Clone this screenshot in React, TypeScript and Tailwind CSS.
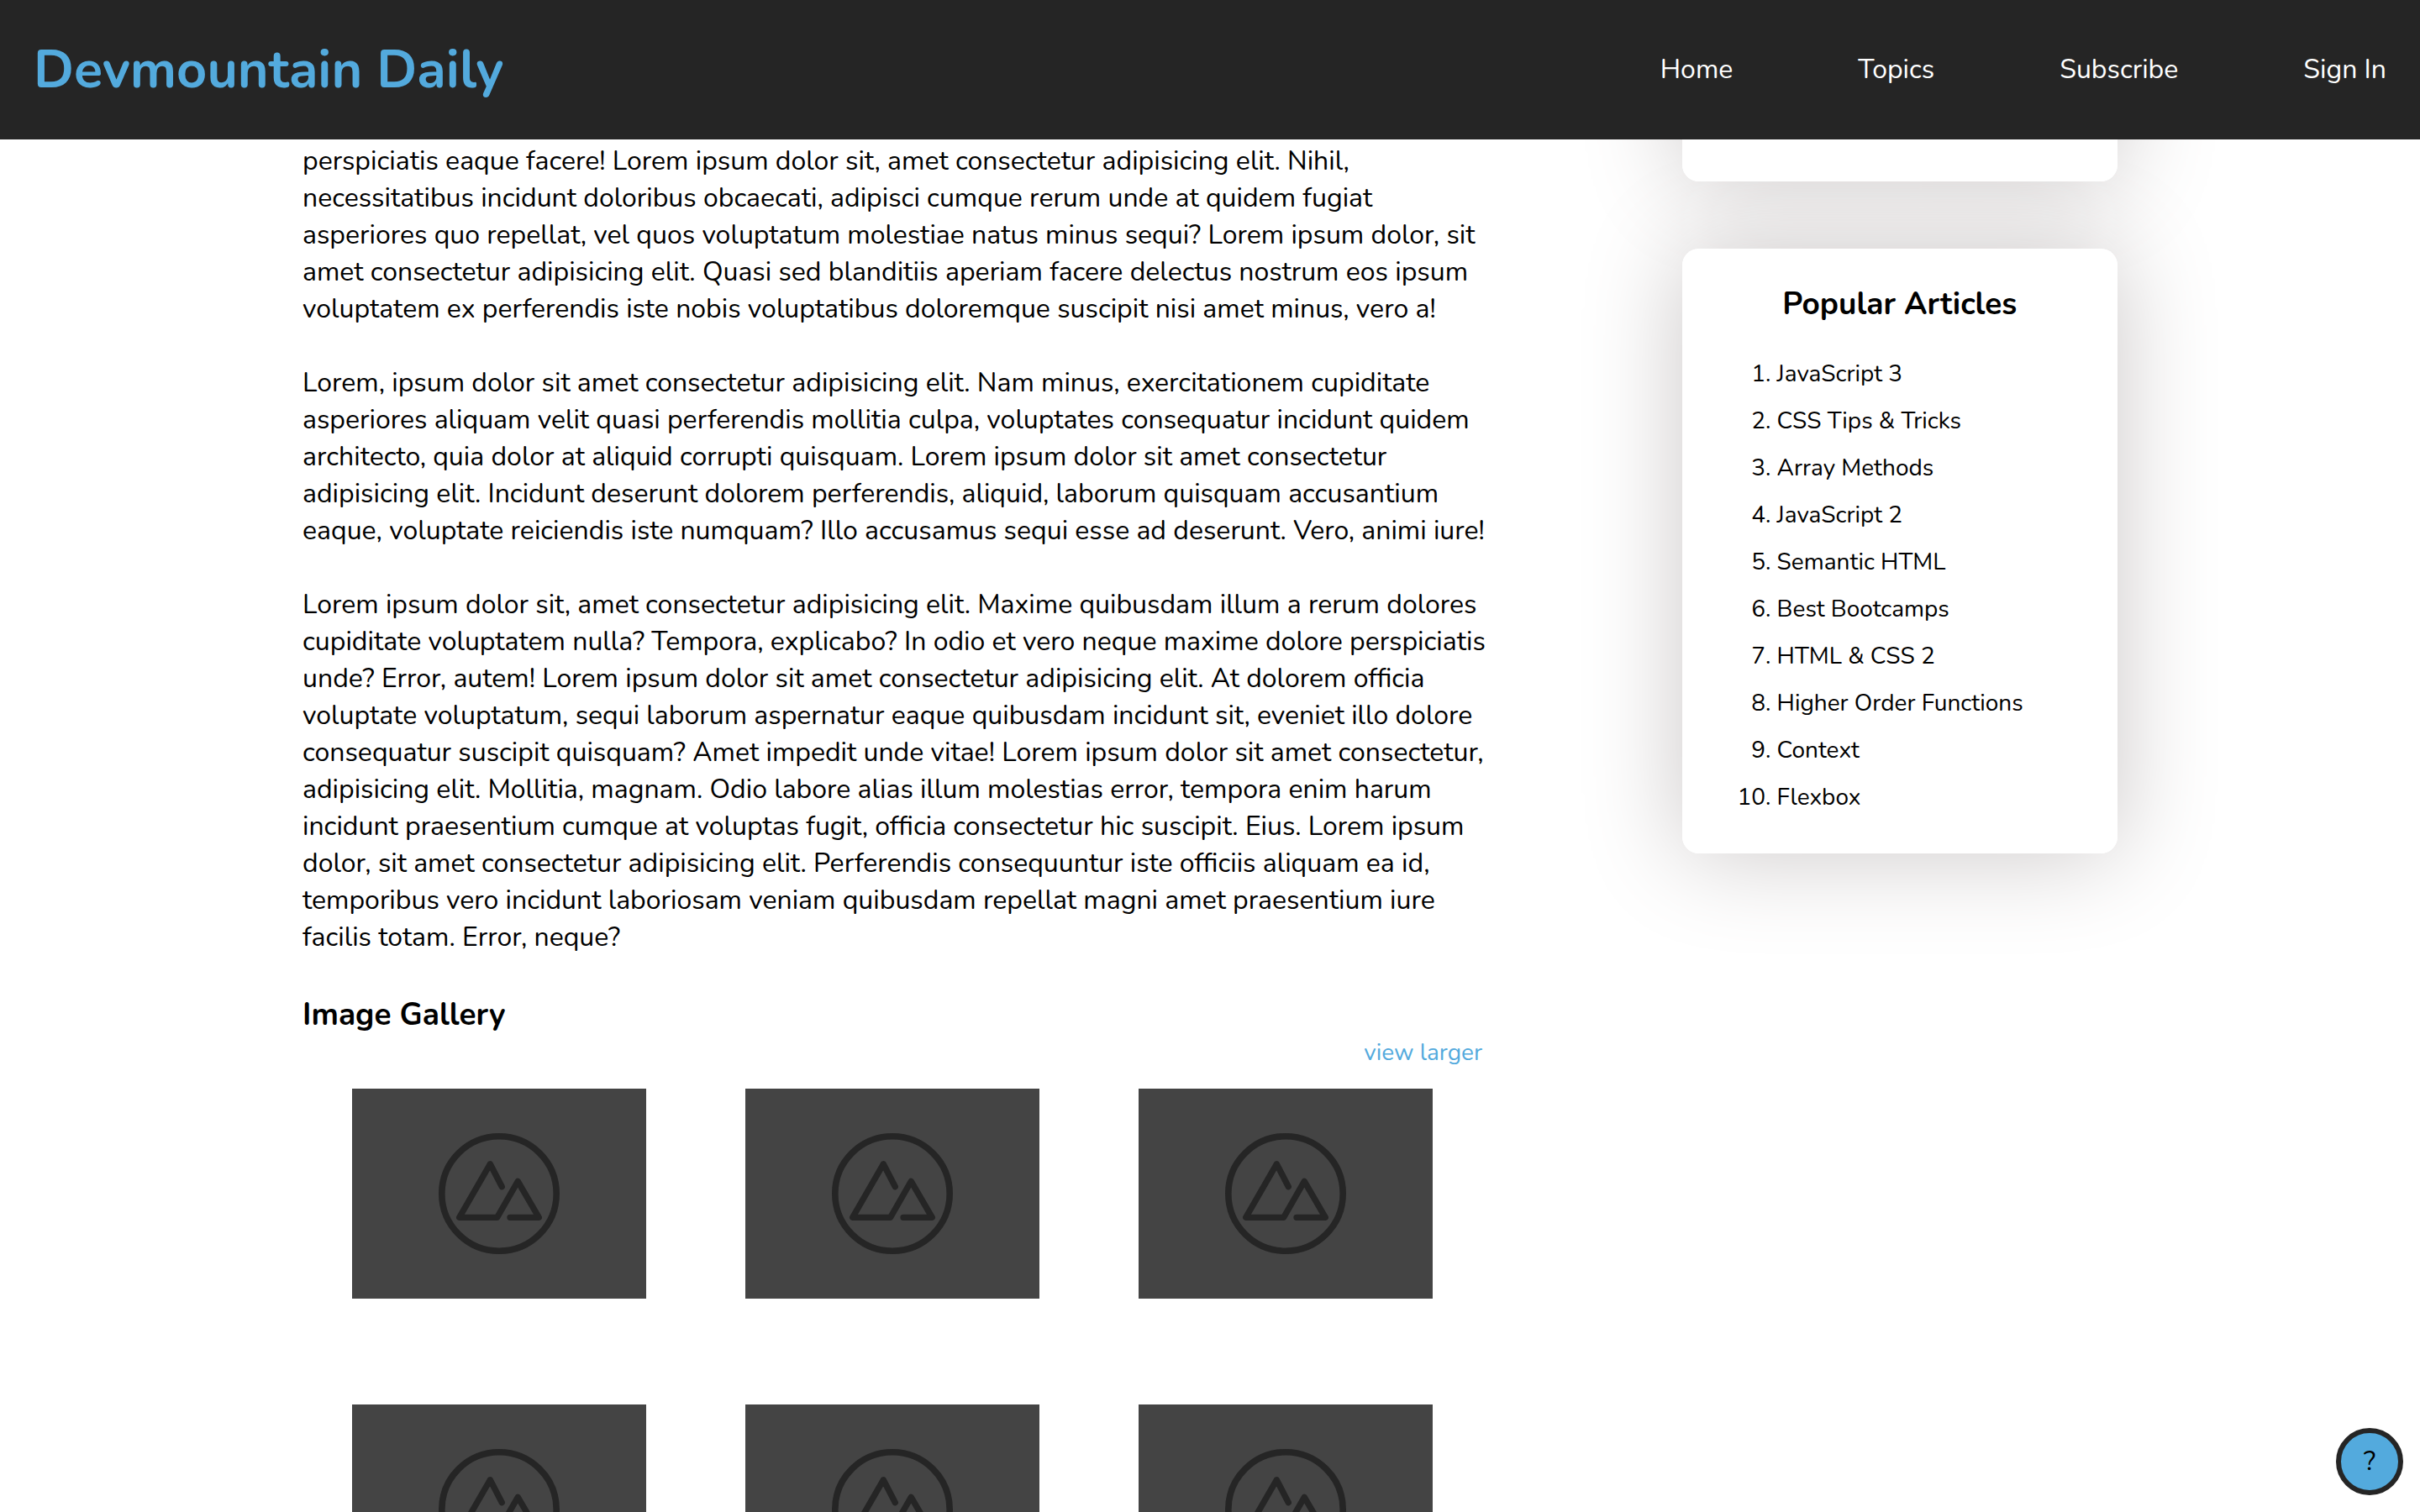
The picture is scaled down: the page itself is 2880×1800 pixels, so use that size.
const NAV_LINKS = ["Home", "Topics", "Subscribe", "Sign In"];

const PARAGRAPHS = [
  [
    "perspiciatis eaque facere! Lorem ipsum dolor sit, amet consectetur adipisicing elit. Nihil,",
    "necessitatibus incidunt doloribus obcaecati, adipisci cumque rerum unde at quidem fugiat",
    "asperiores quo repellat, vel quos voluptatum molestiae natus minus sequi? Lorem ipsum dolor, sit",
    "amet consectetur adipisicing elit. Quasi sed blanditiis aperiam facere delectus nostrum eos ipsum",
    "voluptatem ex perferendis iste nobis voluptatibus doloremque suscipit nisi amet minus, vero a!",
  ],
  [
    "Lorem, ipsum dolor sit amet consectetur adipisicing elit. Nam minus, exercitationem cupiditate",
    "asperiores aliquam velit quasi perferendis mollitia culpa, voluptates consequatur incidunt quidem",
    "architecto, quia dolor at aliquid corrupti quisquam. Lorem ipsum dolor sit amet consectetur",
    "adipisicing elit. Incidunt deserunt dolorem perferendis, aliquid, laborum quisquam accusantium",
    "eaque, voluptate reiciendis iste numquam? Illo accusamus sequi esse ad deserunt. Vero, animi iure!",
  ],
  [
    "Lorem ipsum dolor sit, amet consectetur adipisicing elit. Maxime quibusdam illum a rerum dolores",
    "cupiditate voluptatem nulla? Tempora, explicabo? In odio et vero neque maxime dolore perspiciatis",
    "unde? Error, autem! Lorem ipsum dolor sit amet consectetur adipisicing elit. At dolorem officia",
    "voluptate voluptatum, sequi laborum aspernatur eaque quibusdam incidunt sit, eveniet illo dolore",
    "consequatur suscipit quisquam? Amet impedit unde vitae! Lorem ipsum dolor sit amet consectetur,",
    "adipisicing elit. Mollitia, magnam. Odio labore alias illum molestias error, tempora enim harum",
    "incidunt praesentium cumque at voluptas fugit, officia consectetur hic suscipit. Eius. Lorem ipsum",
    "dolor, sit amet consectetur adipisicing elit. Perferendis consequuntur iste officiis aliquam ea id,",
    "temporibus vero incidunt laboriosam veniam quibusdam repellat magni amet praesentium iure",
    "facilis totam. Error, neque?",
  ],
];

const POPULAR = [
  "JavaScript 3",
  "CSS Tips & Tricks",
  "Array Methods",
  "JavaScript 2",
  "Semantic HTML",
  "Best Bootcamps",
  "HTML & CSS 2",
  "Higher Order Functions",
  "Context",
  "Flexbox",
];

// The shadow sits on a pseudo-element behind every card, so neighbouring cards never shade each other.
const CARD =
  "relative rounded-[20px] bg-white before:absolute before:inset-0 before:-z-10 before:rounded-[20px] before:shadow-[0_0_120px_#cbc7c7] before:content-['']";

function Placeholder() {
  return (
    <svg viewBox="0 0 350 250" className="w-[350px] bg-[#444444]" role="img" aria-label="Placeholder image">
      <g fill="none" stroke="#252525" strokeLinecap="round" strokeLinejoin="round">
        <circle cx="175" cy="125" r="68.2" strokeWidth="7.6" />
        <path
          strokeWidth="7.3"
          d="M178.3 116.7L164.3 89.7L127.7 153.3H172.7L197.3 110.3L222.3 153.3H188"
        />
      </g>
    </svg>
  );
}

function Header() {
  return (
    <header className="relative z-10 flex h-[166px] shrink-0 items-center justify-between bg-[#252525] px-10">
      <h1 className="text-[63px] leading-[88px] font-bold text-[#53aadd]">Devmountain Daily</h1>
      <nav className="flex gap-[149px] text-white">
        {NAV_LINKS.map((label) => (
          <a key={label} href="#">
            {label}
          </a>
        ))}
      </nav>
    </header>
  );
}

function Article() {
  return (
    <article className="w-[65%] pt-1">
      <div className="flex flex-col gap-11">
        {PARAGRAPHS.map((lines) => (
          <p key={lines[0]}>
            {lines.map((line) => (
              <span key={line} className="block whitespace-nowrap">
                {line}{" "}
              </span>
            ))}
          </p>
        ))}
      </div>
      <h2 className="mt-11 text-[37px] leading-[52px] font-bold">Image Gallery</h2>
      <div className="flex justify-end text-[28px] leading-[38px]">
        <a href="#" className="text-[#53aadd]">
          view larger
        </a>
      </div>
      <div className="mt-6 grid grid-cols-3 justify-items-center gap-y-[126px]">
        {[0, 1, 2, 3, 4, 5].map((n) => (
          <Placeholder key={n} />
        ))}
      </div>
    </article>
  );
}

function Sidebar() {
  return (
    <aside className="isolate -mt-[250px] flex w-[24%] flex-col gap-20">
      <div className={`${CARD} h-[300px] shrink-0`} />
      <section className={`${CARD} px-10 pt-10 pb-12`}>
        <h2 className="text-center text-[37px] leading-[52px] font-bold">Popular Articles</h2>
        <ol className="mt-[38px] flex list-decimal flex-col gap-[18px] pl-[73px] text-[28px] leading-[38px]">
          {POPULAR.map((title) => (
            <li key={title}>
              <a href="#">{title}</a>
            </li>
          ))}
        </ol>
      </section>
    </aside>
  );
}

export default function App() {
  return (
    <div className="flex h-screen flex-col overflow-hidden bg-white font-[Nunito,Lato,sans-serif] text-[32px] leading-[44px] text-black">
      <Header />
      <main className="mx-auto flex w-3/4 items-start justify-between">
        <Article />
        <Sidebar />
      </main>
      <button
        type="button"
        aria-label="Help"
        className="fixed right-5 bottom-5 z-20 flex size-20 items-center justify-center rounded-full border-[6px] border-[#252525] bg-[#53aadd]"
      >
        ?
      </button>
    </div>
  );
}
